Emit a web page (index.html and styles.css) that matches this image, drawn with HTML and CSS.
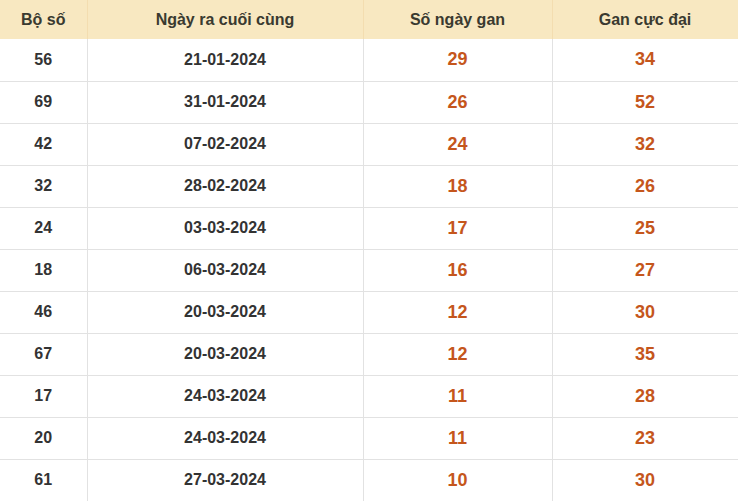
FILE: index.html
```html
<!DOCTYPE html>
<html lang="vi">
<head>
<meta charset="utf-8">
<link rel="stylesheet" href="styles.css">
</head>
<body>
<table class="gan">
  <colgroup>
    <col class="c1"><col class="c2"><col class="c3"><col class="c4">
  </colgroup>
  <thead>
    <tr><th>Bộ số</th><th>Ngày ra cuối cùng</th><th>Số ngày gan</th><th>Gan cực đại</th></tr>
  </thead>
  <tbody>
    <tr><td>56</td><td>21-01-2024</td><td class="hot">29</td><td class="hot">34</td></tr>
    <tr><td>69</td><td>31-01-2024</td><td class="hot">26</td><td class="hot">52</td></tr>
    <tr><td>42</td><td>07-02-2024</td><td class="hot">24</td><td class="hot">32</td></tr>
    <tr><td>32</td><td>28-02-2024</td><td class="hot">18</td><td class="hot">26</td></tr>
    <tr><td>24</td><td>03-03-2024</td><td class="hot">17</td><td class="hot">25</td></tr>
    <tr><td>18</td><td>06-03-2024</td><td class="hot">16</td><td class="hot">27</td></tr>
    <tr><td>46</td><td>20-03-2024</td><td class="hot">12</td><td class="hot">30</td></tr>
    <tr><td>67</td><td>20-03-2024</td><td class="hot">12</td><td class="hot">35</td></tr>
    <tr><td>17</td><td>24-03-2024</td><td class="hot">11</td><td class="hot">28</td></tr>
    <tr><td>20</td><td>24-03-2024</td><td class="hot">11</td><td class="hot">23</td></tr>
    <tr><td>61</td><td>27-03-2024</td><td class="hot">10</td><td class="hot">30</td></tr>
  </tbody>
</table>
</body>
</html>
```
FILE: styles.css
```css
html, body {
  margin: 0;
  padding: 0;
  background: #fff;
}
.gan {
  width: 738px;
  border-collapse: collapse;
  table-layout: fixed;
  font-family: "Liberation Sans", Arial, sans-serif;
  color: #333;
  border-right: 1px solid #f6dcc8;
}
.c1 { width: 87px; }
.c2 { width: 276px; }
.c3 { width: 189px; }
.c4 { width: 186px; }
.gan th {
  height: 39px;
  padding: 0;
  background: #f8e8c1;
  font-size: 16px;
  font-weight: bold;
  color: #3a3a30;
  text-align: center;
  border-left: 1px solid #f3ddb0;
  box-sizing: border-box;
}
.gan th:first-child, .gan td:first-child { border-left: none; }
.gan td {
  height: 42px;
  padding: 0;
  text-align: center;
  font-size: 16px;
  font-weight: bold;
  border-left: 1px solid #e2e2e2;
  border-top: 1px solid #e2e2e2;
  box-sizing: border-box;
}
.gan tbody tr:first-child td { border-top: none; }
.gan td.hot {
  color: #c5561c;
  font-size: 18px;
}
```
